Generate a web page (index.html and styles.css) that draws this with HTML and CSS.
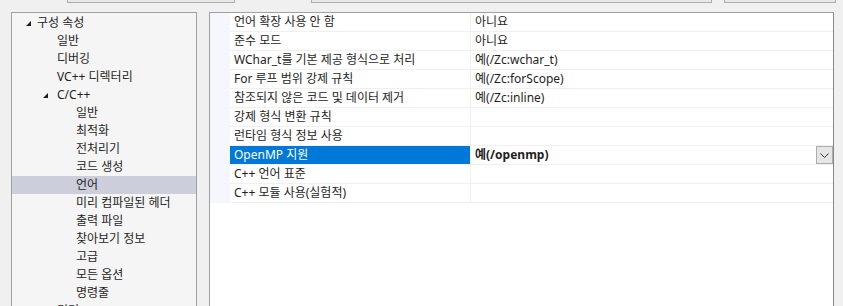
FILE: index.html
```html
<!DOCTYPE html>
<html lang="ko">
<head>
    <meta charset="UTF-8">
    <title>속성 페이지</title>
    <link rel="stylesheet" href="styles.css">
</head>
<body>

<div class="topbar">
    <div class="combo combo-config"></div>
    <div class="combo combo-platform"></div>
    <div class="combo combo-manager"></div>
</div>

<div class="main">
    <div class="tree">
        <div class="node lv0"><span class="expander"><svg width="5" height="5" viewBox="0 0 5 5"><polygon points="5,0 5,5 0,5"/></svg></span>구성 속성</div>
        <div class="node lv1">일반</div>
        <div class="node lv1">디버깅</div>
        <div class="node lv1">VC++ 디렉터리</div>
        <div class="node lv1 parent"><span class="expander"><svg width="5" height="5" viewBox="0 0 5 5"><polygon points="5,0 5,5 0,5"/></svg></span>C/C++</div>
        <div class="node lv2">일반</div>
        <div class="node lv2">최적화</div>
        <div class="node lv2">전처리기</div>
        <div class="node lv2">코드 생성</div>
        <div class="node lv2 selected">언어</div>
        <div class="node lv2">미리 컴파일된 헤더</div>
        <div class="node lv2">출력 파일</div>
        <div class="node lv2">찾아보기 정보</div>
        <div class="node lv2">고급</div>
        <div class="node lv2">모든 옵션</div>
        <div class="node lv2">명령줄</div>
        <div class="node lv1 parent"><span class="expander"><svg width="6" height="8" viewBox="0 0 6 8"><polygon points="0.5,0.5 5,4 0.5,7.5" fill="none" stroke="#1e1e1e"/></svg></span>링커</div>
    </div>

    <div class="grid">
        <div class="row">
            <div class="gutter"></div>
            <div class="name">언어 확장 사용 안 함</div>
            <div class="value">아니요</div>
        </div>
        <div class="row">
            <div class="gutter"></div>
            <div class="name">준수 모드</div>
            <div class="value">아니요</div>
        </div>
        <div class="row">
            <div class="gutter"></div>
            <div class="name">WChar_t를 기본 제공 형식으로 처리</div>
            <div class="value">예(/Zc:wchar_t)</div>
        </div>
        <div class="row">
            <div class="gutter"></div>
            <div class="name">For 루프 범위 강제 규칙</div>
            <div class="value">예(/Zc:forScope)</div>
        </div>
        <div class="row">
            <div class="gutter"></div>
            <div class="name">참조되지 않은 코드 및 데이터 제거</div>
            <div class="value">예(/Zc:inline)</div>
        </div>
        <div class="row">
            <div class="gutter"></div>
            <div class="name">강제 형식 변환 규칙</div>
            <div class="value"></div>
        </div>
        <div class="row">
            <div class="gutter"></div>
            <div class="name">런타임 형식 정보 사용</div>
            <div class="value"></div>
        </div>
        <div class="row active">
            <div class="gutter"></div>
            <div class="name">OpenMP 지원</div>
            <div class="value modified">
                <span>예(/openmp)</span>
                <span class="dropdown"><svg width="9" height="5" viewBox="0 0 9 5"><polyline points="0.5,0.5 4.5,4.5 8.5,0.5" fill="none" stroke="#333"/></svg></span>
            </div>
        </div>
        <div class="row">
            <div class="gutter"></div>
            <div class="name">C++ 언어 표준</div>
            <div class="value"></div>
        </div>
        <div class="row">
            <div class="gutter"></div>
            <div class="name">C++ 모듈 사용(실험적)</div>
            <div class="value"></div>
        </div>
    </div>
</div>

</body>
</html>
```

FILE: styles.css
```css
body {
    margin: 0;
    background: #f0f0f0;
    font-family: "Segoe UI", "Noto Sans", "Noto Sans CJK KR", sans-serif;
    font-size: 12px;
    color: #1e1e1e;
    overflow: hidden;
}

/* 위쪽 콤보 상자들 (잘려 보임) */
.topbar {
    display: flex;
    height: 3px;
}

.combo {
    height: 2px;
    border: 1px solid #adadad;
    border-top: none;
    background: #e8e8e8;
}

.combo-config {
    margin-left: 67px;
    width: 166px;
}

.combo-platform {
    margin-left: 76px;
    width: 399px;
}

.combo-manager {
    margin-left: 12px;
    width: 110px;
}

.main {
    display: flex;
    align-items: flex-start;
    padding: 9px 0 0 11px;
}

/* 왼쪽 트리 */
.tree {
    width: 184px;
    height: 320px;
    border: 1px solid #a0a0a0;
    background: #f5f5f5;
    padding-top: 1px;
}

.node {
    height: 18px;
    line-height: 18px;
    white-space: nowrap;
    position: relative;
}

.node.lv0 { padding-left: 25px; }
.node.lv1 { padding-left: 45px; }
.node.lv2 { padding-left: 64px; }

.node.selected {
    background: #cccedb;
}

.expander {
    display: inline-block;
    width: 12px;
    margin-left: -12px;
    vertical-align: top;
}

.expander svg {
    fill: #1e1e1e;
    display: block;
    margin: 7px 0 0 1px;
}

.node.lv1 .expander {
    width: 15px;
    margin-left: -15px;
}

/* 오른쪽 속성 그리드 */
.grid {
    width: 623px;
    height: 320px;
    margin-left: 12px;
    border: 1px solid #a0a0a0;
    border-right-color: #828790;
    background: #fff;
}

.row {
    display: grid;
    grid-template-columns: 20px 240px 1fr;
    height: 19px;
}

.gutter {
    background: #f5f7fc;
}

.name, .value {
    line-height: 18px;
    border-bottom: 1px solid #f0f0f0;
    white-space: nowrap;
    overflow: hidden;
}

.name {
    padding-left: 4px;
}

.value {
    padding-left: 4px;
    border-left: 1px solid #f0f0f0;
}

.row.active .name {
    background: #0078d7;
    color: #fff;
}

.value.modified {
    display: flex;
    justify-content: space-between;
    font-weight: bold;
}

.dropdown {
    width: 15px;
    height: 16px;
    border: 1px solid #adadad;
    background: #e5e5e5;
    display: flex;
    align-items: center;
    justify-content: center;
}
```
